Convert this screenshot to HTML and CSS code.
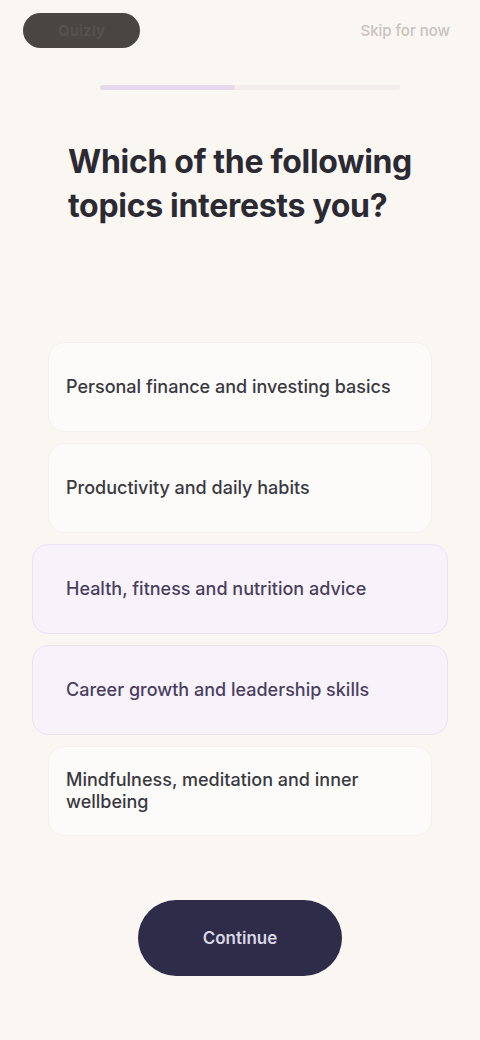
FILE: index.html
```html
<!DOCTYPE html>
<html lang="en">
<head>
<meta charset="utf-8">
<title>Quiz</title>
<link rel="stylesheet" href="styles.css">
</head>
<body>
<div class="screen">
  <header class="topbar">
    <div class="logo-pill"><span>Quizly</span></div>
    <a class="skip" href="#">Skip for now</a>
  </header>
  <div class="progress"><div class="progress-fill" style="width:45%"></div></div>
  <h1 class="question">Which of the following topics interests you?</h1>
  <ul class="options">
    <li class="option">Personal finance and investing basics</li>
    <li class="option">Productivity and daily habits</li>
    <li class="option selected">Health, fitness and nutrition advice</li>
    <li class="option selected">Career growth and leadership skills</li>
    <li class="option">Mindfulness, meditation and inner wellbeing</li>
  </ul>
  <div class="actions">
    <button class="continue">Continue</button>
  </div>
</div>
</body>
</html>
```
FILE: styles.css
```css
* { box-sizing: border-box; }
html, body { margin: 0; padding: 0; }
body {
  background: #faf6f2;
  font-family: Inter, "Noto Sans", "Liberation Sans", sans-serif;
  color: #2e2d35;
}
.screen {
  width: 480px;
  min-height: 1040px;
  display: flex;
  flex-direction: column;
}
.topbar {
  display: flex;
  justify-content: space-between;
  align-items: center;
  padding: 13px 30px 0 23px;
  height: 47px;
}
.logo-pill {
  width: 117px;
  height: 35px;
  border-radius: 18px;
  background: #494541;
  display: flex;
  align-items: center;
  justify-content: center;
}
.logo-pill span {
  font-size: 15px;
  font-weight: 700;
  color: #55514d;
}
.skip {
  font-size: 15px;
  color: #c9c2be;
  text-decoration: none;
  font-weight: 500;
}
.progress {
  margin: 38px 80px 0 100px;
  height: 5px;
  border-radius: 3px;
  background: #f3eeec;
}
.progress-fill {
  height: 100%;
  border-radius: 3px;
  background: #e6d9ee;
}
.question {
  margin: 50px 56px 0 68px;
  font-size: 32px;
  line-height: 44px;
  font-weight: 700;
  letter-spacing: -0.3px;
  color: #2b2a33;
}
.options {
  list-style: none;
  margin: 114px 48px 0;
  padding: 0;
  display: flex;
  flex-direction: column;
  gap: 11px;
}
.option {
  height: 90px;
  display: flex;
  align-items: center;
  padding: 0 35px 0 17px;
  font-size: 18px;
  line-height: 22px;
  font-weight: 500;
  color: #3a3940;
  background: #fcfbfa;
  border: 1px solid #f5f1ee;
  border-radius: 16px;
}
.option.selected {
  margin: 0 -16px;
  padding-left: 33px;
  padding-right: 20px;
  background: #f8f2fb;
  border: 1.5px solid #eee2f2;
  color: #4a3f5e;
}
.actions {
  display: flex;
  justify-content: center;
  margin-top: 64px;
}
.continue {
  width: 204px;
  height: 76px;
  border: none;
  border-radius: 38px;
  background: #2f2c49;
  color: #d9d6e6;
  font-family: inherit;
  font-size: 17px;
  font-weight: 600;
}
```
